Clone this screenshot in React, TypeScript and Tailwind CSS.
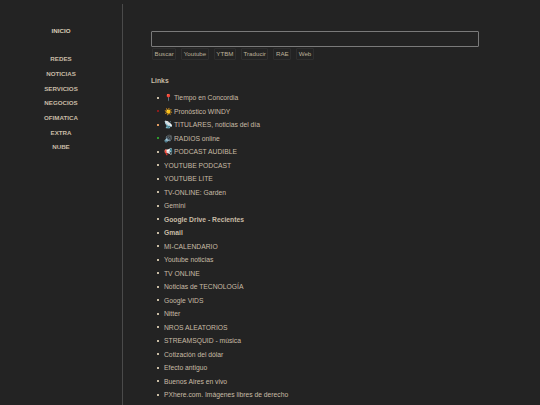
const navItems = ['REDES', 'NOTICIAS', 'SERVICIOS', 'NEGOCIOS', 'OFIMATICA', 'EXTRA', 'NUBE'];
const searchButtons = ['Buscar', 'Youtube', 'YTBM', 'Traducir', 'RAE', 'Web'];

type LinkRow = { label: string; icon?: string; marker?: string; bold?: boolean };

const links: LinkRow[] = [
  { label: 'Tiempo en Concordia', icon: '📍' },
  { label: 'Pronóstico WINDY', icon: '☀️', marker: 'bg-[#8a1c1c]' },
  { label: 'TITULARES, noticias del día', icon: '📡', marker: 'bg-[#e09a60]' },
  { label: 'RADIOS online', icon: '🔊', marker: 'bg-[#2e9a2e]' },
  { label: 'PODCAST AUDIBLE', icon: '📢' },
  { label: 'YOUTUBE PODCAST' },
  { label: 'YOUTUBE LITE' },
  { label: 'TV-ONLINE: Garden' },
  { label: 'Gemini' },
  { label: 'Google Drive - Recientes', bold: true },
  { label: 'Gmail', bold: true },
  { label: 'MI-CALENDARIO' },
  { label: 'Youtube noticias' },
  { label: 'TV ONLINE' },
  { label: 'Noticias de TECNOLOGÍA' },
  { label: 'Google VIDS' },
  { label: 'Nitter' },
  { label: 'NROS ALEATORIOS' },
  { label: 'STREAMSQUID - música' },
  { label: 'Cotización del dólar' },
  { label: 'Efecto antiguo' },
  { label: 'Buenos Aires en vivo' },
  { label: 'PXhere.com. Imágenes libres de derecho' },
];

export default function App() {
  return (
    <div className="flex h-[405px] w-[540px] overflow-hidden bg-[#232323] font-['Liberation_Sans',Arial,sans-serif] text-[#c8bca6]">
      {/* side menu */}
      <nav className="mt-1 flex h-[401px] w-[123px] shrink-0 flex-col items-center border-r border-r-[#4a4a4a] pt-[20px] text-[6.2px] font-bold">
        <a className="leading-[14.7px] text-[#d8ccb6]">INICIO</a>
        <div className="mt-[13.5px] flex flex-col items-center">
          {navItems.map((item) => (
            <a key={item} className="leading-[14.7px]">
              {item}
            </a>
          ))}
        </div>
      </nav>

      {/* main column */}
      <main className="flex-1 pl-[28px] pt-[31px]">
        <input className="block h-[16px] w-[328px] rounded-[1px] border border-[#7a7a7a] bg-transparent" />
        <div className="mt-[1px] flex gap-[5px] pl-[1px]">
          {searchButtons.map((label) => (
            <button
              key={label}
              className="flex h-[12px] items-center rounded-[1px] border border-[#2e2e2e] px-[1.5px] text-[6.2px] text-[#bcb09a]"
            >
              {label}
            </button>
          ))}
        </div>

        <h3 className="mt-[15px] text-[6.75px] font-bold leading-[12px]">Links</h3>

        <ul className="mt-[4px] text-[6.75px]">
          {links.map((link) => (
            <li
              key={link.label}
              className={`flex h-[13.5px] items-center leading-[13.5px] ${link.bold ? 'font-bold' : ''}`}
            >
              <span className={`ml-[6px] mr-[5px] h-[2px] w-[2px] shrink-0 ${link.marker ?? 'bg-[#c8bca4]'}`} />
              {link.icon && <span className="mr-[2px] w-[8px] text-[7px]">{link.icon}</span>}
              {link.label}
            </li>
          ))}
        </ul>
      </main>
    </div>
  );
}
